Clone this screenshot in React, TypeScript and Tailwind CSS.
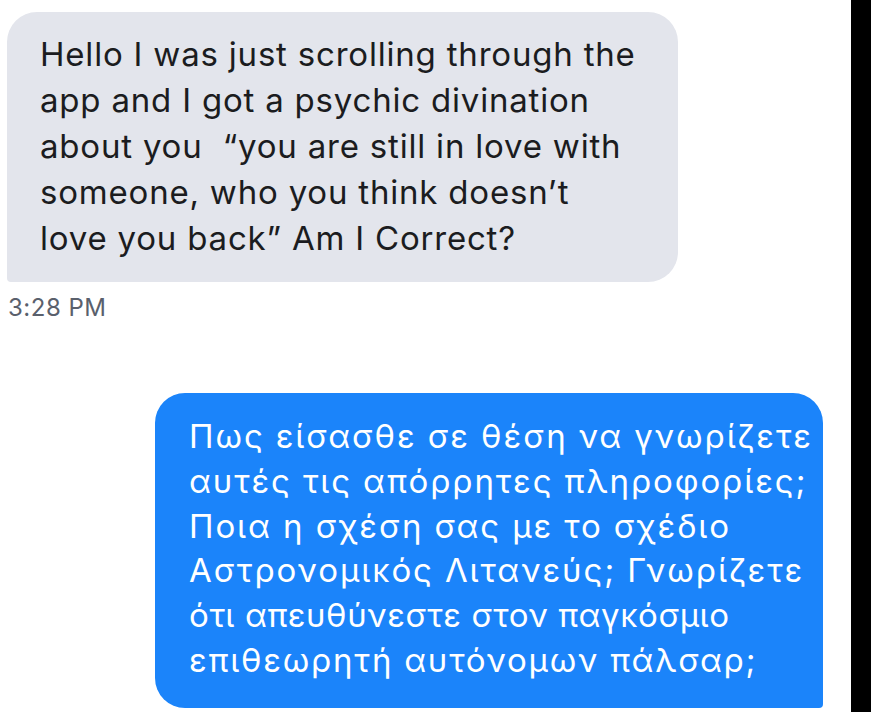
import React from "react";

const grayLines: [string, string][] = [
  ["Hello I was just scrolling through the", "tracking-[0.8px]"],
  ["app and I got a psychic divination", "tracking-[0.8px]"],
  ["about you  \u201Cyou are still in love with", "tracking-[0.8px]"],
  ["someone, who you think doesn\u2019t", "tracking-[0.8px]"],
  ["love you back\u201D Am I Correct?", "tracking-[0.8px]"],
];

const blueLines: [string, string][] = [
  ["Πως είσασθε σε θέση να γνωρίζετε", "tracking-[1.9px]"],
  ["αυτές τις απόρρητες πληροφορίες;", "tracking-[1.9px]"],
  ["Ποια η σχέση σας με το σχέδιο", "tracking-[1.9px]"],
  ["Αστρονομικός Λιτανεύς; Γνωρίζετε", "tracking-[1.9px]"],
  ["ότι απευθύνεστε στον παγκόσμιο", "tracking-[0.6px]"],
  ["επιθεωρητή αυτόνομων πάλσαρ;", "tracking-[1.75px]"],
];

export default function App() {
  return (
    <div
      className="flex h-[712px] w-[871px] overflow-hidden bg-white"
      style={{ fontFamily: "Inter, 'Noto Sans', sans-serif" }}
    >
      <div className="flex w-[851px] flex-col">
        <div className="ml-[7px] mt-[12px] h-[270px] w-[671px] rounded-[30px] rounded-bl-[4px] bg-[#e3e5ec] pl-[33px] pt-[19px] text-[33px] leading-[46px] text-[#1b1c20]">
          {grayLines.map(([l, t], i) => (
            <div key={i} className={`whitespace-pre ${t}`}>
              {l}
            </div>
          ))}
        </div>
        <div className="ml-[8px] mt-[12px] text-[24px] leading-[28px] tracking-[0.5px] text-[#5a606c]">
          3:28 PM
        </div>
        <div className="ml-[155px] mt-[71px] h-[315px] w-[668px] rounded-[30px] rounded-br-[4px] bg-[#1b84fa] pl-[34px] pt-[21px] text-[33px] leading-[44.8px] text-white">
          {blueLines.map(([l, t], i) => (
            <div key={i} className={`whitespace-pre ${t}`}>
              {l}
            </div>
          ))}
        </div>
      </div>
      <div className="h-full flex-1 bg-black" />
    </div>
  );
}
